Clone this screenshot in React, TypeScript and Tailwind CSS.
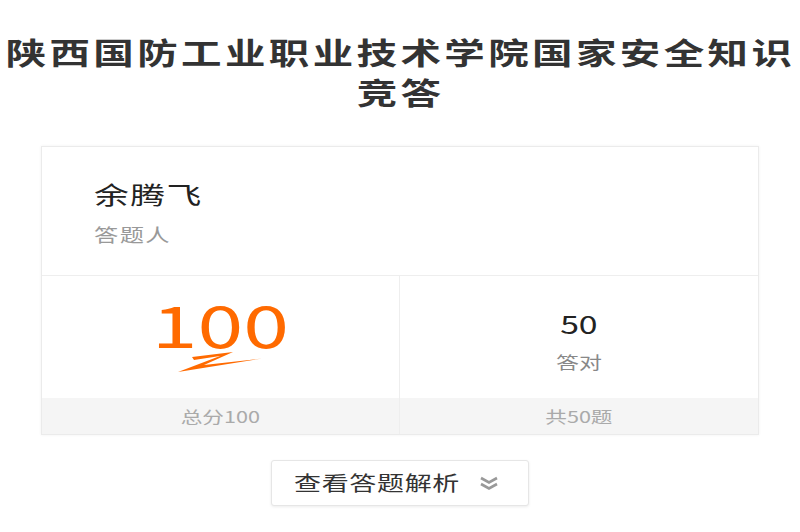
const cjk = { fontFamily: '"Noto Sans CJK SC", "Noto Sans", sans-serif' };

// the screenshot is stretched sideways, so text gets a horizontal scale
function Wide({ children, className = "" }: { children: React.ReactNode; className?: string }) {
    return <span className={`inline-block scale-x-[1.35] ${className}`}>{children}</span>;
}

function Swoosh() {
    return (
        <svg width="90" height="24" viewBox="0 0 90 24" className="block">
            <path d="M18 7 L59 2 L30 15 L88 8.5 L4 22 L46 6 L20 10 Z" fill="#ff6a00" />
        </svg>
    );
}

function DoubleChevron() {
    return (
        <svg width="20" height="15" viewBox="0 0 20 15" className="block">
            <path d="M2 2 L10 6.5 L18 2 M2 8 L10 12.5 L18 8" fill="none" stroke="#999" strokeWidth="2.6" />
        </svg>
    );
}

export default function App() {
    return (
        <div className="w-[800px] h-[532px] bg-white overflow-hidden" style={cjk}>
            <h1 className="pt-[31px] text-center text-[30px] leading-[40px] font-bold text-[#333]">
                <Wide className="origin-center tracking-[2.5px] scale-x-[1.3]">陕西国防工业职业技术学院国家安全知识</Wide>
                <br />
                <Wide className="origin-center tracking-[2.5px] scale-x-[1.3]">竞答</Wide>
            </h1>

            <div className="mx-[41px] mt-[35px] border border-[#ebebeb] shadow-[0_0_3px_rgba(0,0,0,0.06)]">
                <div className="h-[129px] pl-[52px] pt-[31px] border-b border-[#eeeeee]">
                    <div className="text-[24px] leading-[32px] text-[#222]">
                        <Wide className="origin-left tracking-[1px] scale-x-[1.45]">余腾飞</Wide>
                    </div>
                    <div className="mt-[12px] text-[18px] leading-[24px] text-[#999]">
                        <Wide className="origin-left tracking-[1px] scale-x-[1.4]">答题人</Wide>
                    </div>
                </div>

                <div className="grid grid-cols-2">
                    <div className="flex flex-col border-r border-[#eeeeee]">
                        <div className="h-[122px] flex flex-col items-center pt-[19px]">
                            <div className="text-[58px] leading-[56px] text-[#ff6a00]">
                                <Wide className="origin-center scale-x-[1.42]">100</Wide>
                            </div>
                            <div className="-ml-[4px] -mt-[1px]">
                                <Swoosh />
                            </div>
                        </div>
                        <div className="h-[36px] bg-[#f5f5f5] flex items-center justify-center text-[16px] text-[#aaa]">
                            <Wide className="origin-center scale-x-[1.4]">总分100</Wide>
                        </div>
                    </div>
                    <div className="flex flex-col">
                        <div className="h-[122px] flex flex-col items-center pt-[32px]">
                            <div className="text-[25px] leading-[30px] text-[#222]">
                                <Wide className="origin-center scale-x-[1.4]">50</Wide>
                            </div>
                            <div className="mt-[12px] text-[17px] leading-[24px] text-[#888]">
                                <Wide className="origin-center scale-x-[1.4]">答对</Wide>
                            </div>
                        </div>
                        <div className="h-[36px] bg-[#f5f5f5] flex items-center justify-center text-[16px] text-[#aaa]">
                            <Wide className="origin-center scale-x-[1.4]">共50题</Wide>
                        </div>
                    </div>
                </div>
            </div>

            <div className="flex justify-center mt-[25px]">
                <button className="w-[258px] h-[46px] border border-[#e6e6e6] rounded-[3px] shadow-[0_1px_3px_rgba(0,0,0,0.08)] bg-white flex items-center pl-[22px]">
                    <span className="w-[167px] text-left text-[20px] leading-[28px] text-[#333]">
                        <Wide className="origin-left tracking-[0.5px] scale-x-[1.35]">查看答题解析</Wide>
                    </span>
                    <span className="ml-[18px]">
                        <DoubleChevron />
                    </span>
                </button>
            </div>
        </div>
    );
}
